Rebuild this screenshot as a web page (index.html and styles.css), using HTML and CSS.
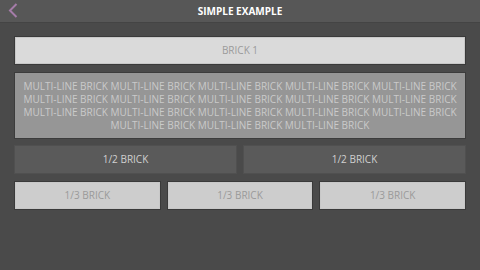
FILE: index.html
```html
<!DOCTYPE html>
<html lang="en">
<head>
    <meta charset="UTF-8">
    <meta name="viewport" content="width=device-width, initial-scale=1.0">
    <title>Simple Example</title>
    <link rel="stylesheet" href="styles.css">
</head>
<body>
<header class="top-bar">
    <a class="back" href="#">
        <svg width="10" height="15" viewBox="0 0 10 15">
            <path d="M8.5 1 L2 7.5 L8.5 14" fill="none" stroke="#a57ca9" stroke-width="2"/>
        </svg>
    </a>
    <h1>SIMPLE EXAMPLE</h1>
</header>

<main class="bricks">
    <div class="brick light">BRICK 1</div>
    <div class="brick medium">MULTI-LINE BRICK MULTI-LINE BRICK MULTI-LINE BRICK MULTI-LINE BRICK MULTI-LINE BRICK MULTI-LINE BRICK MULTI-LINE BRICK MULTI-LINE BRICK MULTI-LINE BRICK MULTI-LINE BRICK MULTI-LINE BRICK MULTI-LINE BRICK MULTI-LINE BRICK MULTI-LINE BRICK MULTI-LINE BRICK MULTI-LINE BRICK MULTI-LINE BRICK MULTI-LINE BRICK</div>
    <div class="row halves">
        <div class="brick dark">1/2 BRICK</div>
        <div class="brick dark">1/2 BRICK</div>
    </div>
    <div class="row thirds">
        <div class="brick light">1/3 BRICK</div>
        <div class="brick light">1/3 BRICK</div>
        <div class="brick light">1/3 BRICK</div>
    </div>
</main>
</body>
</html>
```
FILE: styles.css
```css
body {
    font-family: "Open Sans", "DejaVu Sans", sans-serif;
    background-color: #4a4a4a;
    margin: 0;
    padding: 0;
}

.top-bar {
    position: relative;
    height: 22px;
    background-color: #575757;
    border-bottom: 1px solid #444;
    display: flex;
    align-items: center;
    justify-content: center;
}

.top-bar h1 {
    margin: 0;
    font-size: 10px;
    font-weight: bold;
    color: #fff;
}

.back {
    position: absolute;
    left: 8px;
    top: 3px;
    display: block;
    line-height: 0;
}

.bricks {
    padding: 13px 14px;
    display: flex;
    flex-direction: column;
    gap: 7px;
}

.row {
    display: grid;
    gap: 6px;
}

.halves {
    grid-template-columns: 1fr 1fr;
    margin-top: -1px;
}

.thirds {
    grid-template-columns: 1fr 1fr 1fr;
}

.brick {
    box-sizing: border-box;
    min-height: 29px;
    display: flex;
    align-items: center;
    justify-content: center;
    text-align: center;
    font-size: 10px;
    line-height: 13px;
}

.light {
    background-color: #dadada;
    color: #9a9a9a;
    border: 1px solid #3a3a3a;
    box-shadow: inset 0 0 0 1px #c8c8c8;
}

.thirds .light {
    background-color: #cdcdcd;
}

.medium {
    background-color: #969696;
    color: #cacaca;
    padding: 7px 4px 6px;
    border: 1px solid #3c3c3c;
}

.dark {
    background-color: #5a5a5a;
    color: #d0d0d0;
    border: 1px solid #505050;
}
```
